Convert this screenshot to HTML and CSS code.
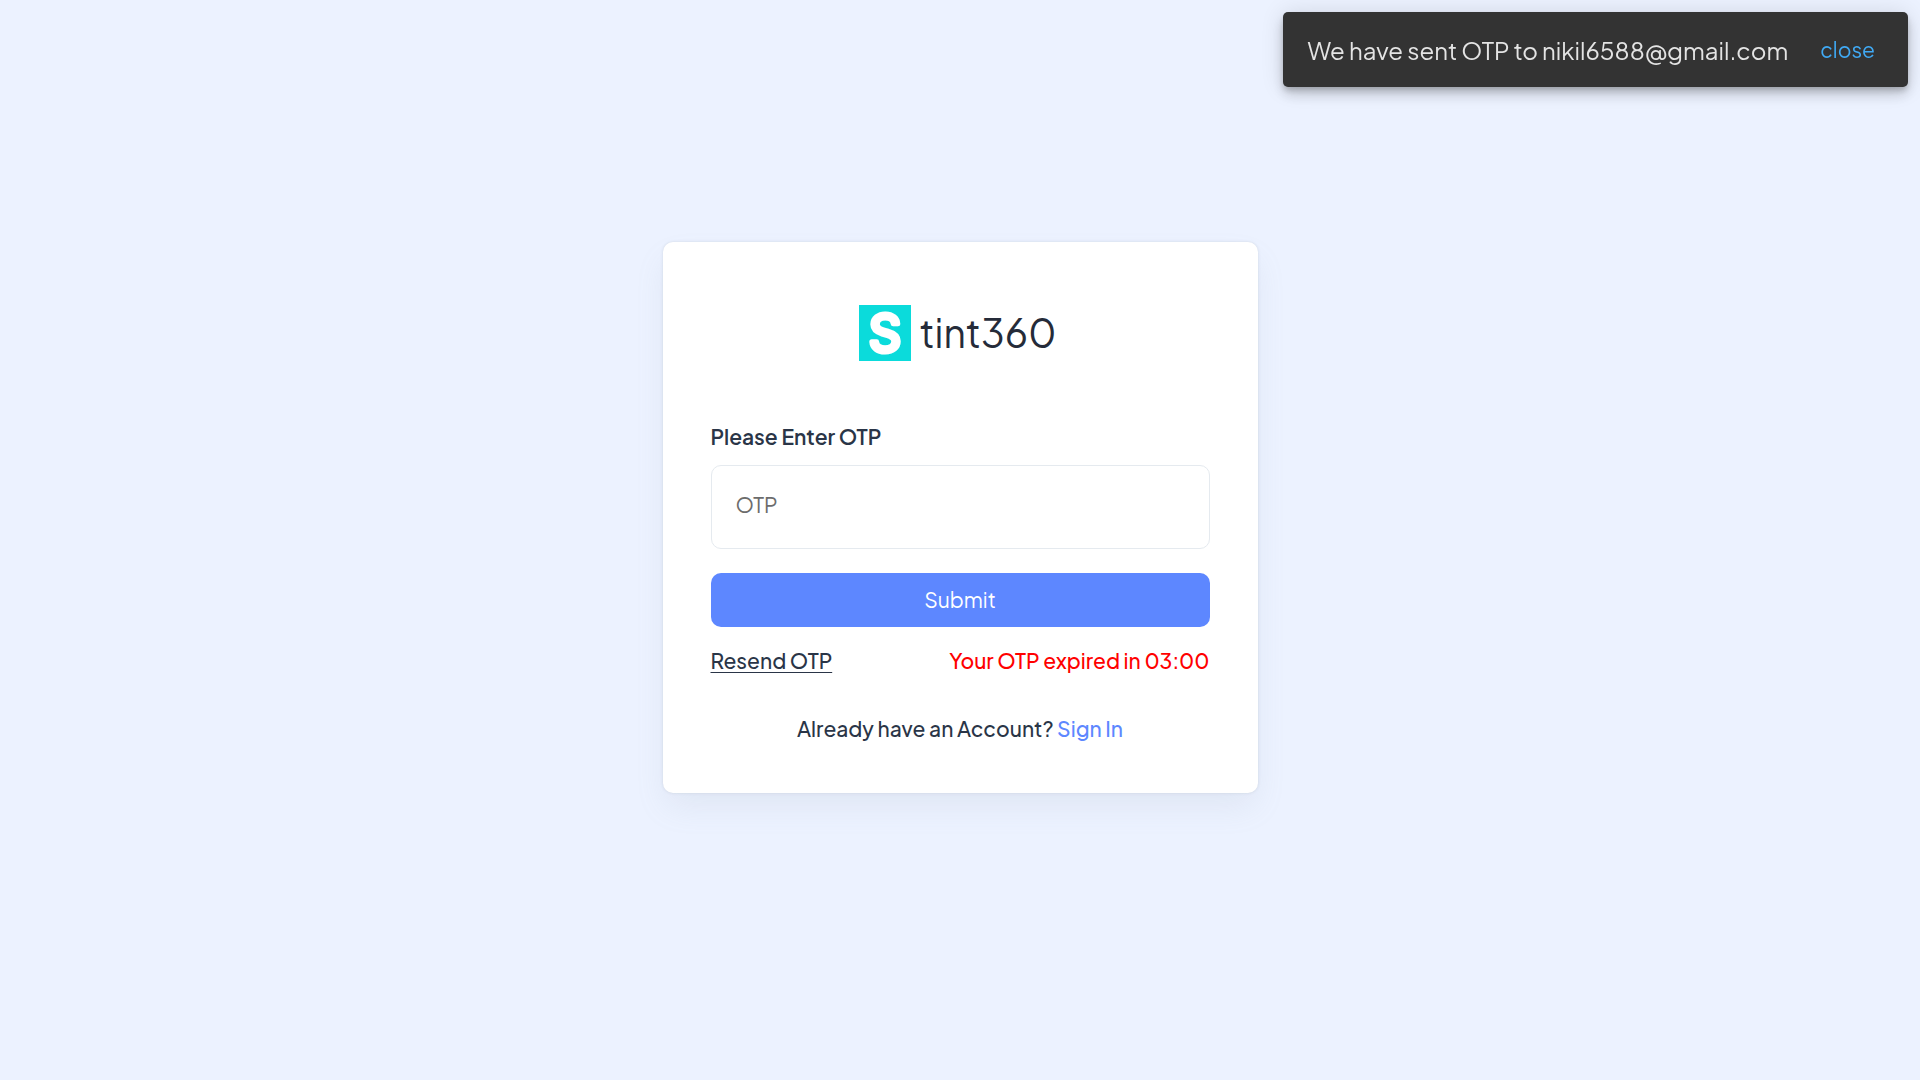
FILE: index.html
```html
<!DOCTYPE html>
<html lang="en">
<head>
  <meta charset="UTF-8" />
  <meta name="viewport" content="width=device-width, initial-scale=1.0" />
  <title>Verify OTP - Stint360</title>
  <link rel="stylesheet" href="styles.css">
</head>

<body>
  <div class="toast" role="status">
    <span class="toast-text">We have sent OTP to nikil6588@gmail.com</span>
    <button type="button" class="toast-close">close</button>
  </div>

  <main class="page">
    <div class="card">
      <a href="#" class="logo">
        <svg class="logo-mark" viewBox="0 0 52 56" aria-hidden="true">
          <rect width="52" height="56" fill="#0bdbdb" />
          <text x="26" y="46" text-anchor="middle">S</text>
        </svg>
        <span class="logo-text">tint360</span>
      </a>

      <form>
        <div class="form-group">
          <label for="otp">Please Enter OTP</label>
          <input type="text" id="otp" placeholder="OTP" maxlength="6" />
        </div>

        <button type="submit" class="btn">Submit</button>
      </form>

      <div class="otp-row">
        <a href="#" class="resend">Resend OTP</a>
        <span class="timer">Your OTP expired in 03:00</span>
      </div>

      <p class="signin">Already have an Account? <a href="#">Sign In</a></p>
    </div>
  </main>
</body>
</html>
```
FILE: styles.css
```css
* {
  box-sizing: border-box;
}

body {
  margin: 0;
  font-family: "Plus Jakarta Sans", Inter, sans-serif;
  font-size: 21px;
  line-height: 32px;
  color: #2a3547;
  background: #ecf2ff;
}

.page {
  min-height: 100vh;
  display: flex;
  align-items: center;
  justify-content: center;
  padding: 24px 24px 69px;
}

.card {
  width: 100%;
  max-width: 595px;
  padding: 48px;
  background: #fff;
  border-radius: 10px;
  box-shadow: 0 0 3px rgba(145, 158, 171, 0.3), 0 16px 32px -4px rgba(145, 158, 171, 0.14);
}

.logo {
  display: flex;
  align-items: center;
  justify-content: center;
  gap: 8px;
  padding: 15px 4px 15px 0;
  margin-bottom: 45px;
  color: #252b39;
  text-decoration: none;
}

.logo-mark {
  width: 52px;
  height: 56px;
  overflow: visible;
}

.logo-mark text {
  font-family: Inter, sans-serif;
  font-size: 50px;
  font-weight: 400;
  fill: #fff;
  stroke: #fff;
  stroke-width: 5px;
  stroke-linejoin: round;
}

.logo-text {
  font-size: 39px;
  font-weight: 400;
  line-height: 56px;
}

.form-group {
  margin-bottom: 24px;
}

label {
  display: block;
  font-weight: 600;
  margin-bottom: 12px;
}

input {
  display: block;
  width: 100%;
  height: 84px;
  padding: 0 24px 6px;
  font: inherit;
  color: inherit;
  background: #fff;
  border: 1px solid #e5eaef;
  border-radius: 10px;
}

input::placeholder {
  color: #6c6c6c;
}

.btn {
  display: block;
  width: 100%;
  padding: 11px;
  font: inherit;
  color: #fff;
  background: #5d87ff;
  border: none;
  border-radius: 10px;
  cursor: pointer;
}

.otp-row {
  display: flex;
  justify-content: space-between;
  margin-top: 18px;
  font-weight: 500;
}

.resend {
  color: inherit;
  text-decoration-thickness: 1px;
  text-underline-offset: 3px;
}

.timer {
  color: #f00;
}

.signin {
  margin: 36px 0 0;
  font-weight: 500;
  text-align: center;
}

.signin a {
  color: #5d87ff;
  text-decoration: none;
}

.toast {
  position: fixed;
  top: 12px;
  right: 12px;
  display: flex;
  align-items: center;
  gap: 16px;
  padding: 20px 24px 19px;
  background: #333;
  border-radius: 5px;
  box-shadow: 0 4px 6px -1px rgba(0, 0, 0, 0.2), 0 8px 13px rgba(0, 0, 0, 0.14), 0 1px 23px rgba(0, 0, 0, 0.12);
}

.toast-text {
  font-size: 24px;
  line-height: 36px;
  color: #e4e4e4;
}

.toast-close {
  padding: 0 9px 0 16px;
  font: inherit;
  color: #40aaf5;
  background: none;
  border: none;
  cursor: pointer;
}
```
